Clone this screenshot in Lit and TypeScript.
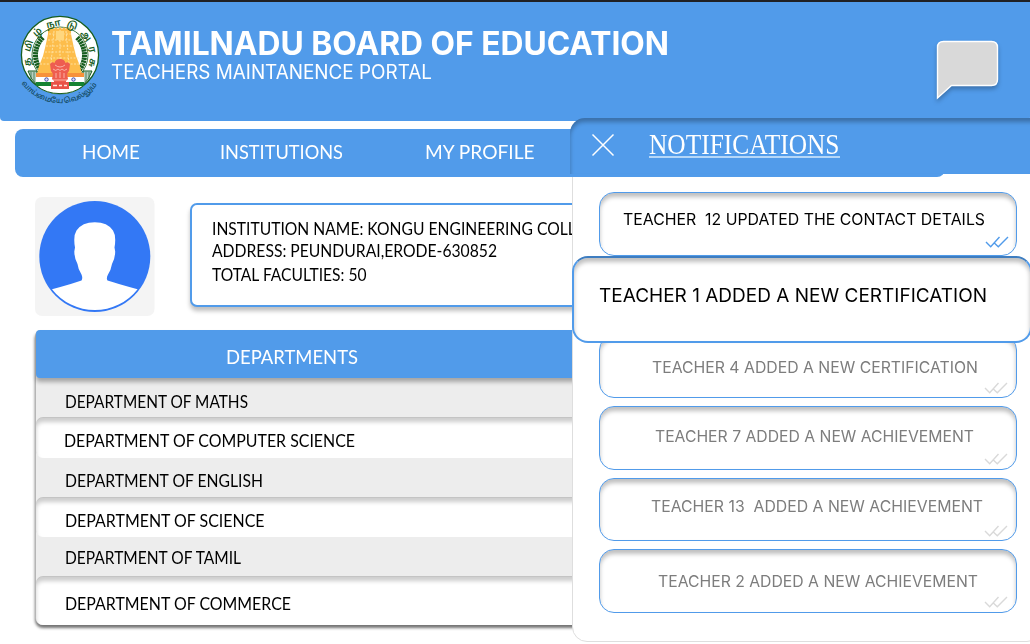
import { LitElement, html, css, svg } from "lit";
import { customElement, property } from "lit/decorators.js";

/** One line of text scaled horizontally to a fixed measure. */
@customElement("fit-line")
class FitLine extends LitElement {
  @property({ type: Number }) w = 100;
  static styles = css`
    :host { display: block; line-height: 1; white-space: pre; height: 1em; flex: none; }
    .ink { display: inline-block; transform-origin: 0 0; }
  `;
  render() {
    return html`<span class="ink"><slot></slot></span>`;
  }
  fit() {
    const ink = this.renderRoot.querySelector(".ink") as HTMLElement;
    const natural = ink.offsetWidth ? ink.getBoundingClientRect().width : 0;
    if (natural) ink.style.transform = `scaleX(${this.w / natural})`;
  }
  firstUpdated() {
    this.style.width = this.w + "px";
    this.fit();
  }
}

const NOTES = [
  { text: "TEACHER  12 UPDATED THE CONTACT DETAILS", x: 23.5, y: 17.5, w: 362, read: true },
  { text: "TEACHER 4 ADDED A NEW CERTIFICATION", x: 52.5, y: 23, w: 326, read: false },
  { text: "TEACHER 7 ADDED A NEW ACHIEVEMENT", x: 55.5, y: 20.5, w: 319, read: false },
  { text: "TEACHER 13  ADDED A NEW ACHIEVEMENT", x: 51.5, y: 19, w: 332, read: false },
  { text: "TEACHER 2 ADDED A NEW ACHIEVEMENT", x: 58, y: 22.5, w: 320, read: false },
];

const ROWS = [
  { name: "DEPARTMENT OF MATHS", x: 28.5, y: 15, w: 183 },
  { name: "DEPARTMENT OF COMPUTER SCIENCE", x: 27.5, y: 14, w: 291 },
  { name: "DEPARTMENT OF ENGLISH", x: 28.5, y: 14.5, w: 198 },
  { name: "DEPARTMENT OF SCIENCE", x: 28.5, y: 14.5, w: 199.5 },
  { name: "DEPARTMENT OF TAMIL", x: 28.5, y: 12, w: 176 },
  { name: "DEPARTMENT OF COMMERCE", x: 28.5, y: 17.5, w: 226 },
];

const ray = (i: number) => {
  const a = ((i * 6.5 + 145) * Math.PI) / 180;
  const c = Math.cos(a), s = Math.sin(a);
  return svg`<path d="M${40 + 22 * c} ${40 + 22 * s}L${40 + 27 * c} ${40 + 27 * s}M${40 - 22 * c} ${40 + 22 * s}L${40 - 27 * c} ${40 + 27 * s}"/>`;
};

const emblem = html`
  <svg class="emblem" width="84" height="94" viewBox="0 0 84 94">
    <defs>
      <path id="ringArc" d="M11.500 50.500A30 30 0 1 1 68.500 50.500"/>
      <path id="mottoArc" d="M1.500 68A47 47 0 0 0 78.500 68"/>
    </defs>
    <circle cx="40" cy="40" r="38.600" fill="#fff" stroke="#175d1f" stroke-width="1.300"/>
    <circle cx="40" cy="40" r="28" fill="#fff" stroke="#2b6b2e" stroke-width=".9"/>
    <g stroke="#175d1f" stroke-width="2.300">${[0, 1, 2, 3, 4, 5, 6, 7, 8, 9, 10, 11, 12].map(ray)}</g>
    <path d="M8 56h9v14q-6-5-9-14zM72 56H63v14q6-5 9-14z" fill="#b9cfc0" stroke="#175d1f" stroke-width="1"/>
    <path d="M11 57v7M14 57v10M69 57v7M66 57v10" stroke="#4f8560" stroke-width="1"/>
    <path d="M28 12l2 2 2-2 2 2 2-2 2 2 2-2 2 2 2-2 2 2 2-2 2 2 1-2v7l1 5 2 9 2 8 4 10 2 8H17l2-8 4-10 2-8 2-9 1-5z" fill="#fdbd4b"/>
    <path d="M29 19h23M28 25h25M26 31h29M25 37h31M23 43h36M20 49h42M40 15v32M34 16l-3 33M46 16l3 33" stroke="#fff0c4" stroke-width=".7" stroke-dasharray="2 1.4" fill="none"/>
    <path d="M36 16h8v9h-8z" fill="#ffd77e"/>
    <path d="M16 58h48v4H16z" fill="#f7923a"/>
    <path d="M16 62h48v5H16z" fill="#fff"/>
    <path d="M16 67h48v4H16z" fill="#158333"/>
    <path d="M17 71h46q-9 8-23 8t-23-8z" fill="#fff"/>
    <path d="M17 71q9 7.600 23 7.600t23-7.600" fill="none" stroke="#175d1f" stroke-width="1"/>
    <g fill="#dfe2f7" stroke="#4149a4" stroke-width="1"><circle cx="26.500" cy="64.500" r="1.700"/><circle cx="53.500" cy="64.500" r="1.700"/></g>
    <path d="M34.500 48q1-4 5.500-4t5.500 4q2.500-2 4.500 1l-1 7-2 3 1 5-2 2v7H34v-7l-2-2 1-5-2-3-1-7q2-3 4.500-1z" fill="#ee5d50"/>
    <path d="M35 50q5 4 10 0M33 54q3 3 5 0 2 3 4 0 2 3 5 0M36 58v5M40 57v6M44 58v5M33 65h14" stroke="#ffd5cc" stroke-width=".7" fill="none"/>
    <path d="M31 67h18v7H31z" fill="#e95248"/>
    <path d="M33 70.500h4m2 0h3m2 0h3" stroke="#ffe6e0" stroke-width="1.600"/>
    <text class="ring"><textPath href="#ringArc" textLength="114" lengthAdjust="spacing">தமிழ்நாடுஅரசு</textPath></text>
    <text class="motto"><textPath href="#mottoArc" textLength="87">வாய்மையே வெல்லும்</textPath></text>
  </svg>`;

const ticks = html`
  <svg class="ticks" width="24" height="12" viewBox="0 0 24 12">
    <path d="M1 6l4.700 4.700L14.500 1M9.300 7l4 3.700L23 1" fill="none" stroke="currentColor" stroke-width="1.400"/>
  </svg>`;

@customElement("app-root")
class AppRoot extends LitElement {
  static styles = css`
    :host { display: block; font-family: Inter, "Liberation Sans", sans-serif; }
    * { box-sizing: border-box; }
    .page { position: relative; width: 1030px; height: 644px; overflow: hidden; background: #fff; }
    .head { height: 121px; border-top: 2px solid #202124; background: #519bea; border-radius: 0 0 4px 4px;
      display: flex; color: #fff; padding-left: 20px; }
    .emblem { margin: 12.700px 0 0 .3px; flex: none; overflow: visible; }
    .ring { font: 600 9.500px "Noto Sans Tamil", "Noto Sans", sans-serif; fill: #175d1f; }
    .motto { font: 500 7.500px "Noto Sans Tamil", "Noto Sans", sans-serif; fill: #124a63; }
    .titles { margin-left: 6.700px; flex: 1; }
    .t1 { font-size: 32px; font-weight: 700; margin-top: 26px; }
    .t2 { font-size: 19.500px; margin-top: 3px; }
    .bubble { margin: 37px 28.500px 0 0; flex: none; filter: drop-shadow(0 3px 2px rgba(0,0,0,.25)); }
    .deco { font-family: Lato, sans-serif; }
    .nav { position: relative; z-index: 2; margin: 8px 0 0 15px; width: 930px; height: 48px; border-radius: 8px;
      background: #519bea; color: #fff; font-size: 20px; display: flex; padding: 11.500px 0 0 66.500px; }
    .n2 { margin-left: 80.500px; }
    .n3 { margin-left: 82px; }
    .intro { display: flex; padding: 20px 0 0 35px; gap: 35.500px; height: 153px; }
    .avatar { flex: none; width: 119.500px; height: 119px; }
    .info { margin-top: 6px; width: 740px; height: 104px; border: 2.500px solid #519bea; border-radius: 7px; background: #fff;
      box-shadow: 0 4px 4px rgba(0,0,0,.25); padding: 14.500px 0 0 20px; font-size: 17.200px; color: #000; }
    .i2 { margin-top: 5px; }
    .i3 { margin-top: 7.500px; }
    .table { margin-left: 35px; width: 900px; height: 295px; border-radius: 6px 0 0 8px; background: #ededed;
      border-left: 1px solid #b5b5b5; box-shadow: 0 3px 3px rgba(0,0,0,.55); color: #000; font-size: 17.200px; }
    .thead { height: 48px; border-radius: 4px; background: #519bea; color: #fff; font-size: 20px;
      box-shadow: 0 4px 4px rgba(0,0,0,.3); padding: 16px 0 0 190px; position: relative; }
    .row { height: 40px; }
    .row:nth-child(odd) { height: 39.500px; background: #fff; border-radius: 7px;
      box-shadow: inset 0 4px 4px rgba(0,0,0,.2), 0 -1px 0 #c4c4c4; }
    .row:last-child { height: 47.500px; }
    .drawer { position: absolute; z-index: 1; left: 572px; top: 120px; width: 470px; height: 522px; background: #fff;
      border: 1px solid #dedede; border-radius: 15px; padding: 71.400px 0 0 26.500px; }
    .bar { position: absolute; z-index: 3; left: 570px; top: 118px; width: 475px; height: 55.500px; background: #519bea;
      border-radius: 15px 0 0 0; box-shadow: inset 0 4px 4px rgba(0,0,0,.28);
      color: #fff; display: flex; padding-left: 21px; }
    .cross { margin-top: 15px; flex: none; }
    .heading { font-family: "Liberation Serif", serif; font-size: 29px; margin: 12px 0 0 34px;
      height: 28px; border-bottom: 2px solid #b5d7f8; }
    .list { display: flex; flex-direction: column; gap: 8px; margin-left: -.6px; }
    .card { position: relative; width: 418px; height: 63.500px; border: 1px solid #519bea; border-radius: 15px;
      box-shadow: inset 0 4px 4px rgba(0,0,0,.25); font-size: 16px; color: #7d7d7d; }
    .card.read { color: #000; margin-bottom: 71px; }
    .ticks { position: absolute; right: 8px; bottom: 3.500px; color: #d9d9d9; }
    .read .ticks { color: #519bea; bottom: 7px; right: 7px; }
    .focus { position: absolute; z-index: 4; left: 571.500px; top: 255.500px; width: 460px; height: 87px; background: #fff;
      border: 2px solid #519bea; border-top-color: #3e7dc0; border-radius: 16px; color: #000; font-size: 19.200px;
      box-shadow: inset 0 4px 4px rgba(0,0,0,.25); padding: 28.500px 0 0 25px; }
  `;

  render() {
    return html`<div class="page">
      <header class="head">
        ${emblem}
        <div class="titles">
          <fit-line class="t1" w="558">TAMILNADU BOARD OF EDUCATION</fit-line>
          <fit-line class="t2" w="321">TEACHERS MAINTANENCE PORTAL</fit-line>
        </div>
        <svg class="bubble" width="66" height="64" viewBox="0 0 66 64">
          <path d="M1.500 59V8.500q0-6 6-6h48q6 0 6 6v32q0 6-6 6H15.500z" fill="#d9d9d9" stroke="#fff" stroke-width="1.400"/>
        </svg>
      </header>
      <nav class="nav deco">
        <fit-line w="58">HOME</fit-line>
        <fit-line class="n2" w="123">INSTITUTIONS</fit-line>
        <fit-line class="n3" w="109.500">MY PROFILE</fit-line>
      </nav>
      <section class="intro">
        <svg class="avatar" viewBox="0 0 119.500 119">
          <rect width="119.500" height="119" rx="7" fill="#f4f4f4"/>
          <circle cx="59.800" cy="59.500" r="55.500" fill="#3378f5"/>
          <path d="M17 92.200Q37 87 46.500 83.500Q48 81 46.500 77.500Q43 72 42.500 67Q39.500 62 39.300 54.500L40 50.500Q38 39 41.500 33.500Q47 25.200 59.800 25.200T78 33.500Q81.500 39 79.500 50.500L80.200 54.500Q80 62 77 67Q76 73 73 77.500Q71 81 72.500 83.500Q83 87 102.600 92.200A54.300 54.300 0 0 1 17 92.200z" fill="#fff"/>
        </svg>
        <div class="info deco">
          <fit-line w="393">INSTITUTION NAME: KONGU ENGINEERING COLLEGE</fit-line>
          <fit-line class="i2" w="285">ADDRESS: PEUNDURAI,ERODE-630852</fit-line>
          <fit-line class="i3" w="154.500">TOTAL FACULTIES: 50</fit-line>
        </div>
      </section>
      <section class="table deco">
        <div class="thead"><fit-line w="132">DEPARTMENTS</fit-line></div>
        ${ROWS.map((r) => html`<div class="row"><fit-line w=${r.w} style="padding:${r.y}px 0 0 ${r.x}px">${r.name}</fit-line></div>`)}
      </section>
      <aside class="drawer">
        <div class="list">
          ${NOTES.map((n) => html`<div class="card ${n.read ? "read" : ""}">
            <fit-line w=${n.w} style="padding:${n.y}px 0 0 ${n.x}px">${n.text}</fit-line>${ticks}
          </div>`)}
        </div>
      </aside>
      <div class="bar">
        <svg class="cross" width="24" height="24" viewBox="0 0 24 24"><path d="M1.500 1.500l21 21M22.500 1.500l-21 21" stroke="#fff" stroke-width="1.500"/></svg>
        <fit-line class="heading" w="190.500">NOTIFICATIONS</fit-line>
      </div>
      <div class="focus"><fit-line w="388">TEACHER 1 ADDED A NEW CERTIFICATION</fit-line></div>
    </div>`;
  }
}
